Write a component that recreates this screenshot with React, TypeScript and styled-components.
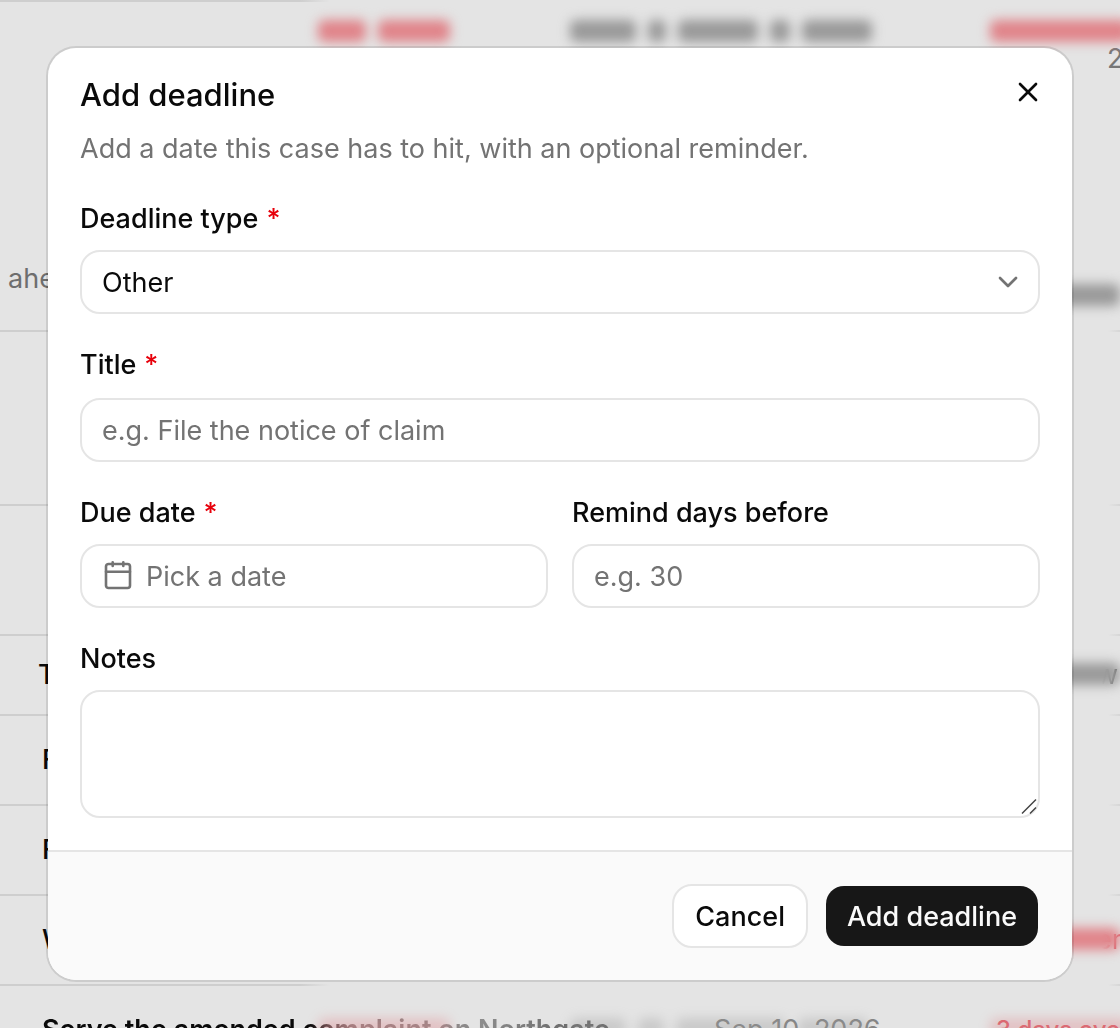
import React from "react";
import styled, { createGlobalStyle } from "styled-components";
import { ChevronDown, X } from "lucide-react";

const GlobalStyle = createGlobalStyle`
  *, *::before, *::after { box-sizing: border-box; }
  body {
    margin: 0;
    background: #e4e4e4;
    color: #0a0a0a;
    font-family: Inter, "Liberation Sans", sans-serif;
    font-size: 27px;
  }
  button, input, select, textarea { font: inherit; color: inherit; }
`;

const Page = styled.div`
  height: 100vh;
  overflow: hidden;
`;

/* Case page, dimmed behind the dialog */
const Row = styled.div<{ $height: number; $inset?: number }>`
  display: grid;
  grid-template-columns: 276px 252px 144px 276px 1fr;
  align-items: center;
  height: ${(p) => p.$height}px;
  padding-left: ${(p) => p.$inset ?? 42}px;
  white-space: nowrap;
  background: linear-gradient(
      to right,
      #cecece 300px,
      transparent 330px,
      transparent calc(100% - 12px),
      #d6d6d6
    )
    top / 100% 2px no-repeat;
`;

const RowTitle = styled.span`
  grid-area: 1 / 1 / 2 / 4;
  font-weight: 500;
`;

const FadedTitle = styled(RowTitle)`
  justify-self: start;
  font-weight: 600;
  color: transparent;
  background: linear-gradient(to right, #0a0a0a 270px, #8c7c7c 310px, #8c8c8c 440px, #5c5c5c);
  background-clip: text;
`;

const RowDate = styled.span`
  grid-area: 1 / 4;
  color: #858585;
`;

const RowStatus = styled.span`
  grid-area: 1 / 5;
  padding-left: 6px;
  font-size: 24px;
  font-weight: 500;
  color: #d9606a;
`;

const Summary = styled.div`
  display: flex;
  flex-direction: column;
  height: 330px;
  background: linear-gradient(to right, #cecece 300px, transparent 330px) top / 100% 2px no-repeat;
`;

const SummaryHead = styled.div`
  display: grid;
  grid-template-columns: 276px 252px 420px 1fr;
  padding: 20px 0 2px 42px;
`;

const SmearGroup = styled.div<{ $column: number; $faint?: boolean }>`
  grid-row: 1;
  grid-column: ${(p) => p.$column};
  display: flex;
  gap: 12px;
  filter: blur(6px);
  opacity: ${(p) => (p.$faint ? 0.35 : 1)};
`;

const Smear = styled.span<{ $width: number; $red?: boolean }>`
  flex: none;
  width: ${(p) => p.$width}px;
  height: 22px;
  border-radius: 6px;
  background: ${(p) => (p.$red ? "#e08389" : "#999")};
`;

const SummaryCount = styled.span`
  align-self: flex-end;
  width: 13px;
  line-height: 30px;
  color: #777;
`;

const SummaryNote = styled.div`
  display: flex;
  align-items: flex-end;
  justify-content: space-between;
  margin-top: auto;
  padding: 0 0 24px 8px;
`;

const NoteText = styled.span`
  padding-bottom: 10px;
  line-height: 34px;
  color: #6e6e6e;
`;

const EdgeSmear = styled.div`
  display: flex;
  grid-area: 1 / 5;
  justify-self: end;
  filter: blur(6px);
`;

const EdgeText = styled.span<{ $red?: boolean }>`
  grid-area: 1 / 5;
  justify-self: end;
  width: 24px;
  color: transparent;
  background: linear-gradient(to right, transparent 6px, ${(p) => (p.$red ? "#d9606a" : "#555")} 20px);
  background-clip: text;
`;

/* Dialog */
const Overlay = styled.div`
  position: fixed;
  inset: 0;
  display: flex;
  align-items: center;
  padding: 0 48px;
`;

const Dialog = styled.form`
  position: relative;
  flex: 1;
  min-width: 0;
  border-radius: 28px;
  background: #fff;
  background-clip: padding-box;
  box-shadow: 0 0 0 2px rgba(0, 0, 0, 0.1);
`;

const Body = styled.div`
  display: grid;
  gap: 32px;
  padding: 32px;
`;

const Header = styled.header`
  display: grid;
  gap: 20px;
`;

const Heading = styled.h2`
  margin: 0;
  font-size: 31px;
  font-weight: 500;
  line-height: 30px;
`;

const Description = styled.p`
  margin: 0;
  line-height: 38px;
  color: #737373;
`;

const CloseButton = styled.button`
  position: absolute;
  top: 28px;
  right: 28px;
  display: flex;
  padding: 0;
  border: 0;
  background: none;
  cursor: pointer;
`;

const Field = styled.div<{ $gap?: number }>`
  display: grid;
  gap: ${(p) => p.$gap ?? 12}px;
  min-width: 0;
`;

const Columns = styled.div`
  display: grid;
  grid-template-columns: 1fr 1fr;
  gap: 24px;
`;

const Label = styled.label`
  display: flex;
  gap: 8px;
  font-weight: 500;
  line-height: 38px;
`;

const Star = styled.span`
  color: #e7000b;
`;

const Control = styled.input`
  display: block;
  width: 100%;
  height: 64px;
  padding: 0 20px;
  border: 2px solid #e5e5e5;
  border-radius: 20px;
  background: #fff;
  outline: none;
  &::placeholder { color: #737373; opacity: 1; }
`;

const SelectControl = styled(Control).attrs({ as: "select" })`
  appearance: none;
`;

const ControlWrap = styled.div`
  position: relative;
  svg {
    position: absolute;
    pointer-events: none;
    color: #737373;
  }
`;

const SelectIcon = styled(ChevronDown)`
  top: 16px;
  right: 16px;
`;

const DateButton = styled(Control).attrs({ as: "button" })`
  display: flex;
  align-items: center;
  gap: 12px;
  color: #737373;
  text-align: left;
`;

const NotesArea = styled(Control).attrs({ as: "textarea" })`
  height: 128px;
  padding: 14px 20px;
  resize: vertical;
  &::-webkit-resizer { display: none; }
`;

const Grip = styled.svg`
  right: 2px;
  bottom: 2px;
`;

const Footer = styled.footer`
  display: flex;
  justify-content: flex-end;
  gap: 16px;
  padding: 32px;
  border-top: 2px solid #e5e5e5;
  border-radius: 0 0 28px 28px;
  background: #fafafa;
`;

const Button = styled.button<{ $primary?: boolean }>`
  height: 64px;
  padding: 0 21px;
  border: 2px solid ${(p) => (p.$primary ? "transparent" : "#e5e5e5")};
  border-radius: 20px;
  background: ${(p) => (p.$primary ? "#171717" : "#fff")};
  background-clip: padding-box;
  color: ${(p) => (p.$primary ? "#fafafa" : "#0a0a0a")};
  font-weight: 500;
  cursor: pointer;
`;

function CalendarIcon() {
  return (
    <svg width="32" height="32" viewBox="0 0 32 32" fill="none" stroke="currentColor" strokeWidth="2.6" strokeLinecap="round" aria-hidden="true">
      <rect x="4" y="4" width="24" height="24" rx="2.5" />
      <path d="M4 11.7H28M10.7 2.2V6M21.3 2.2V6" />
    </svg>
  );
}

function CasePage() {
  return (
    <Page aria-hidden="true">
      <Summary>
        <SummaryHead>
          <SmearGroup $column={2}>
            <Smear $width={48} $red />
            <Smear $width={72} $red />
          </SmearGroup>
          <SmearGroup $column={3}>
            <Smear $width={66} />
            <Smear $width={18} />
            <Smear $width={80} />
            <Smear $width={20} />
            <Smear $width={70} />
          </SmearGroup>
          <SmearGroup $column={4}><Smear $width={140} $red /></SmearGroup>
        </SummaryHead>
        <SummaryCount>2</SummaryCount>
        <SummaryNote>
          <NoteText>ahead</NoteText>
          <EdgeSmear><Smear $width={60} /></EdgeSmear>
        </SummaryNote>
      </Summary>
      <Row $height={174} />
      <Row $height={130} />
      <Row $height={80} $inset={38}>
        <RowTitle>T</RowTitle>
        <EdgeSmear><Smear $width={60} /></EdgeSmear>
        <EdgeText>wn</EdgeText>
      </Row>
      <Row $height={90}><RowTitle>F</RowTitle></Row>
      <Row $height={90}><RowTitle>F</RowTitle></Row>
      <Row $height={90}>
        <RowTitle>W</RowTitle>
        <EdgeSmear><Smear $width={60} $red /></EdgeSmear>
        <EdgeText $red>er</EdgeText>
      </Row>
      <Row $height={90}>
        <SmearGroup $column={2} $faint><Smear $width={132} $red /></SmearGroup>
        <SmearGroup $column={3} $faint>
          <Smear $width={56} />
          <Smear $width={26} />
          <Smear $width={110} />
          <Smear $width={70} />
        </SmearGroup>
        <SmearGroup $column={5} $faint><Smear $width={140} $red /></SmearGroup>
        <FadedTitle>Serve the amended complaint on Northgate</FadedTitle>
        <RowDate>Sep 10, 2026</RowDate>
        <RowStatus>3 days over</RowStatus>
      </Row>
    </Page>
  );
}

export default function App() {
  return (
    <>
      <GlobalStyle />
      <CasePage />
      <Overlay>
        <Dialog role="dialog" aria-labelledby="dialog-title" onSubmit={(e: React.FormEvent) => e.preventDefault()}>
          <Body>
            <Header>
              <Heading id="dialog-title">Add deadline</Heading>
              <Description>Add a date this case has to hit, with an optional reminder.</Description>
            </Header>
            <Field>
              <Label htmlFor="type">Deadline type <Star>*</Star></Label>
              <ControlWrap>
                <SelectControl id="type" defaultValue="other">
                  <option value="other">Other</option>
                </SelectControl>
                <SelectIcon size={32} />
              </ControlWrap>
            </Field>
            <Field $gap={14}>
              <Label htmlFor="title">Title <Star>*</Star></Label>
              <Control id="title" placeholder="e.g. File the notice of claim" />
            </Field>
            <Columns>
              <Field>
                <Label htmlFor="due">Due date <Star>*</Star></Label>
                <DateButton id="due" type="button">
                  <CalendarIcon />
                  Pick a date
                </DateButton>
              </Field>
              <Field>
                <Label htmlFor="remind">Remind days before</Label>
                <Control id="remind" inputMode="numeric" placeholder="e.g. 30" />
              </Field>
            </Columns>
            <Field>
              <Label htmlFor="notes">Notes</Label>
              <ControlWrap>
                <NotesArea id="notes" />
                <Grip width="18" height="18" viewBox="0 0 18 18" fill="none" stroke="#444" strokeWidth="1.5" aria-hidden="true">
                  <path d="M2 15.5L16 1.5M10 15.5L16 9.5" />
                </Grip>
              </ControlWrap>
            </Field>
          </Body>
          <Footer>
            <Button type="button">Cancel</Button>
            <Button type="submit" $primary>Add deadline</Button>
          </Footer>
          <CloseButton type="button" aria-label="Close"><X size={32} /></CloseButton>
        </Dialog>
      </Overlay>
    </>
  );
}
